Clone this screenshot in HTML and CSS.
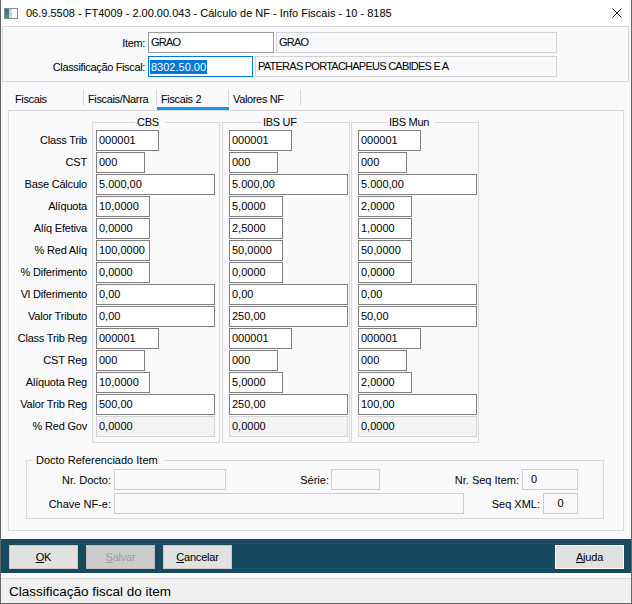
FILE: index.html
```html
<!DOCTYPE html>
<html lang="pt">
<head>
<meta charset="utf-8">
<title>Cálculo de NF - Info Fiscais</title>
<link rel="stylesheet" href="styles.css">
</head>
<body>
<div class="window">
  <div class="titlebar">
    <svg class="app-icon" width="14" height="11" viewBox="0 0 14 11">
      <defs>
        <linearGradient id="ig" x1="0" y1="0" x2="0" y2="1">
          <stop offset="0" stop-color="#2f6fb3"/>
          <stop offset="1" stop-color="#3f9a6a"/>
        </linearGradient>
      </defs>
      <rect x="0.5" y="0.5" width="13" height="10" fill="#fbfbfb" stroke="#8a8a8a"/>
      <rect x="1" y="1" width="4" height="9" fill="url(#ig)"/>
      <rect x="5" y="1" width="3" height="9" fill="#c9d6d0"/>
    </svg>
    <span class="title">06.9.5508 - FT4009 - 2.00.00.043 - Cálculo de NF - Info Fiscais - 10 - 8185</span>
    <svg class="close" width="10" height="10" viewBox="0 0 10 10">
      <path d="M0.5 0.5 L9.5 9.5 M9.5 0.5 L0.5 9.5" stroke="#111" stroke-width="1" fill="none"/>
    </svg>
  </div>

  <div class="header">
    <div class="hrow">
      <span class="hlabel">Item:</span>
      <div class="hfield w126">GRAO</div>
      <div class="hfield ro w281">GRAO</div>
    </div>
    <div class="hrow">
      <span class="hlabel">Classificação Fiscal:</span>
      <div class="hfield focus w105"><span class="sel">8302.50.00</span></div>
      <div class="hfield ro w302">PATERAS PORTACHAPEUS CABIDES E A</div>
    </div>
  </div>

  <div class="tabs">
    <div class="tab tab-first"><span class="tab-label">Fiscais</span></div>
    <div class="tab tab-second"><span class="tab-label">Fiscais/Narra</span></div>
    <div class="tab active"><span class="tab-label">Fiscais 2</span></div>
    <div class="tab"><span class="tab-label">Valores NF</span></div>
  </div>

  <div class="panel">
    <div class="taxes">
      <div class="labels">
        <div>Class Trib</div>
        <div>CST</div>
        <div>Base Cálculo</div>
        <div>Alíquota</div>
        <div>Alíq Efetiva</div>
        <div>% Red Alíq</div>
        <div>% Diferimento</div>
        <div>Vl Diferimento</div>
        <div>Valor Tributo</div>
        <div>Class Trib Reg</div>
        <div>CST Reg</div>
        <div>Alíquota Reg</div>
        <div>Valor Trib Reg</div>
        <div>% Red Gov</div>
      </div>

      <fieldset class="group group-cbs">
        <legend>CBS</legend>
        <div class="field w63">000001</div>
        <div class="field w49">000</div>
        <div class="field w119">5.000,00</div>
        <div class="field w54">10,0000</div>
        <div class="field w54">0,0000</div>
        <div class="field w54">100,0000</div>
        <div class="field w54">0,0000</div>
        <div class="field w119">0,00</div>
        <div class="field w119">0,00</div>
        <div class="field w63">000001</div>
        <div class="field w49">000</div>
        <div class="field w54">10,0000</div>
        <div class="field w119">500,00</div>
        <div class="field w119 disabled">0,0000</div>
      </fieldset>

      <fieldset class="group group-uf">
        <legend>IBS UF</legend>
        <div class="field w63">000001</div>
        <div class="field w49">000</div>
        <div class="field w119">5.000,00</div>
        <div class="field w54">5,0000</div>
        <div class="field w54">2,5000</div>
        <div class="field w54">50,0000</div>
        <div class="field w54">0,0000</div>
        <div class="field w119">0,00</div>
        <div class="field w119">250,00</div>
        <div class="field w63">000001</div>
        <div class="field w49">000</div>
        <div class="field w54">5,0000</div>
        <div class="field w119">250,00</div>
        <div class="field w119 disabled">0,0000</div>
      </fieldset>

      <fieldset class="group group-mun">
        <legend>IBS Mun</legend>
        <div class="field w63">000001</div>
        <div class="field w49">000</div>
        <div class="field w119">5.000,00</div>
        <div class="field w54">2,0000</div>
        <div class="field w54">1,0000</div>
        <div class="field w54">50,0000</div>
        <div class="field w54">0,0000</div>
        <div class="field w119">0,00</div>
        <div class="field w119">50,00</div>
        <div class="field w63">000001</div>
        <div class="field w49">000</div>
        <div class="field w54">2,0000</div>
        <div class="field w119">100,00</div>
        <div class="field w119 disabled">0,0000</div>
      </fieldset>
    </div>

    <fieldset class="docref">
      <legend>Docto Referenciado Item</legend>
      <div class="drow">
        <span class="dlabel l84">Nr. Docto:</span>
        <div class="dfield w112"></div>
        <span class="dlabel l103">Série:</span>
        <div class="dfield w49"></div>
        <span class="dlabel l139">Nr. Seq Item:</span>
        <div class="dfield w56 num">0</div>
      </div>
      <div class="drow">
        <span class="dlabel l84">Chave NF-e:</span>
        <div class="dfield w350"></div>
        <span class="dlabel l76">Seq XML:</span>
        <div class="dfield w35 center">0</div>
      </div>
    </fieldset>
  </div>

  <div class="buttonbar">
    <div class="btn"><span><u>O</u>K</span></div>
    <div class="btn disabled"><span><u>S</u>alvar</span></div>
    <div class="btn"><span><u>C</u>ancelar</span></div>
    <div class="btn btn-help"><span><u>A</u>juda</span></div>
  </div>

  <div class="status">
    <span class="status-text">Classificação fiscal do item</span>
  </div>
</div>
</body>
</html>
```

FILE: styles.css
```css
* {
  box-sizing: border-box;
}

body {
  margin: 0;
  font-family: "Liberation Sans", Arial, sans-serif;
  font-size: 11px;
  color: #000;
  background: #fff;
}

.window {
  width: 632px;
  height: 604px;
  border: 1px solid #646464;
  border-top: 0;
  background: #f9f9fb;
  display: flex;
  flex-direction: column;
  overflow: hidden;
}

/* title bar */
.titlebar {
  flex: none;
  height: 26px;
  background: #fff;
  display: flex;
  align-items: center;
}

.app-icon {
  margin-left: 3px;
  flex: none;
}

.title {
  margin-left: 8px;
  font-size: 11px;
  white-space: nowrap;
}

.close {
  margin-left: auto;
  margin-right: 9px;
  flex: none;
}

/* header */
.header {
  flex: none;
  margin: 0 2px 0 1px;
  border: 1px solid #dadada;
  padding: 5px 0 4px;
  display: flex;
  flex-direction: column;
  gap: 3px;
}

.hrow {
  display: flex;
  align-items: center;
  height: 21px;
}

.hlabel {
  width: 142px;
  margin-right: 3px;
  text-align: right;
  letter-spacing: -0.35px;
  white-space: nowrap;
}

.hfield {
  height: 21px;
  border: 1px solid #9a9a9a;
  background: #fff;
  padding: 0 2px;
  line-height: 19px;
  letter-spacing: -0.75px;
  white-space: nowrap;
  overflow: hidden;
}

.hfield + .hfield {
  margin-left: 2px;
}

.hfield.ro {
  border-color: #d4d4d4;
  background: #f9f9fb;
}

.hfield.focus {
  border-color: #0078d7;
  padding-left: 1px;
  display: flex;
  align-items: center;
  letter-spacing: 0;
}

.sel {
  background: #0078d7;
  color: #fff;
  line-height: 14px;
  padding: 0 1px;
}

/* tabs */
.tabs {
  flex: none;
  height: 28px;
  display: flex;
  padding: 8px 0 0 7px;
}

.tab {
  width: 72px;
  padding-bottom: 2px;
  border-bottom: 3px solid transparent;
}

.tab-first {
  width: 76px;
}

.tab-second {
  width: 73px;
}

.tab.active {
  border-bottom-color: #0f9ae0;
}

.tab-label {
  display: block;
  height: 15px;
  line-height: 19px;
  padding-left: 4px;
  border-right: 1px solid #d6d6d6;
  letter-spacing: -0.35px;
  white-space: nowrap;
}

.tab-first .tab-label {
  padding-left: 7px;
}

/* panel */
.panel {
  flex: none;
  margin-left: 7px;
  width: 616px;
  height: 421px;
  border: 1px solid #d9d9d9;
  padding: 4px 0 11px;
  display: flex;
  flex-direction: column;
}

.taxes {
  display: flex;
  align-items: flex-start;
}

.labels {
  width: 83px;
  padding: 15px 5px 0 0;
  text-align: right;
  letter-spacing: -0.2px;
}

.labels div {
  height: 21px;
  line-height: 21px;
  margin-bottom: 1px;
  white-space: nowrap;
}

.group {
  margin: 0;
  min-width: 0;
  width: 128px;
  border: 1px solid #d9d9d9;
  padding: 1px 0 4px 6px;
}

.group legend {
  padding: 0 6px 0 2px;
  line-height: 14px;
  letter-spacing: -0.3px;
}

.group-cbs {
  padding-left: 3px;
}

.group-cbs legend {
  margin-left: 39px;
}

.group-uf {
  margin-left: 2px;
}

.group-uf legend {
  margin-left: 32px;
}

.group-mun {
  margin-left: 1px;
}

.group-mun legend {
  margin-left: 29px;
}

.field {
  height: 21px;
  margin-bottom: 1px;
  border: 1px solid #7f7f7f;
  background: #fff;
  padding: 0 2px;
  line-height: 19px;
  white-space: nowrap;
  overflow: hidden;
}

.field.disabled {
  border-color: #d6d6d6;
  background: #f3f3f3;
}

.w35 { width: 35px; }
.w49 { width: 49px; }
.w54 { width: 54px; }
.w56 { width: 56px; }
.w63 { width: 63px; }
.w105 { width: 105px; }
.w112 { width: 112px; }
.w119 { width: 119px; }
.w126 { width: 126px; }
.w281 { width: 281px; }
.w302 { width: 302px; }
.w350 { width: 350px; }

/* referenced document */
.docref {
  margin: 10px 0 0 17px;
  min-width: 0;
  width: 578px;
  border: 1px solid #d9d9d9;
  padding: 2px 0 4px 0;
}

.docref legend {
  margin-left: 6px;
  padding: 0 6px 0 3px;
  line-height: 14px;
}

.drow {
  display: flex;
  align-items: center;
  height: 21px;
}

.drow + .drow {
  margin-top: 3px;
}

.dlabel {
  text-align: right;
  white-space: nowrap;
  margin-right: 3px;
}

.l84 { width: 84px; }
.l103 { width: 103px; margin-right: 2px; }
.l139 { width: 139px; }
.l76 { width: 76px; }

.dfield {
  height: 21px;
  border: 1px solid #cdcdcd;
  padding: 0 2px;
  line-height: 19px;
}

.dfield.num {
  padding-left: 8px;
}

.dfield.center {
  text-align: center;
}

/* buttons */
.buttonbar {
  flex: none;
  margin-top: 8px;
  height: 34px;
  background: #174a5e;
  display: flex;
  align-items: flex-start;
  gap: 8px;
  padding: 6px 7px 0 8px;
}

.btn {
  width: 69px;
  height: 24px;
  border: 1px solid #cacaca;
  background: #e1e1e1;
  display: flex;
  align-items: center;
  justify-content: center;
  letter-spacing: -0.2px;
}

.btn.disabled {
  background: #cccccc;
  border-color: #bdbdbd;
  color: #9d9d9d;
}

.btn-help {
  margin-left: auto;
  border-color: #ffffff;
}

/* status bar */
.status {
  flex: 1;
  margin-top: 5px;
  border-top: 1px solid #d9d9d9;
  background: #f0f0f0;
  padding-left: 8px;
  display: flex;
  align-items: center;
  font-size: 13.5px;
}
```
